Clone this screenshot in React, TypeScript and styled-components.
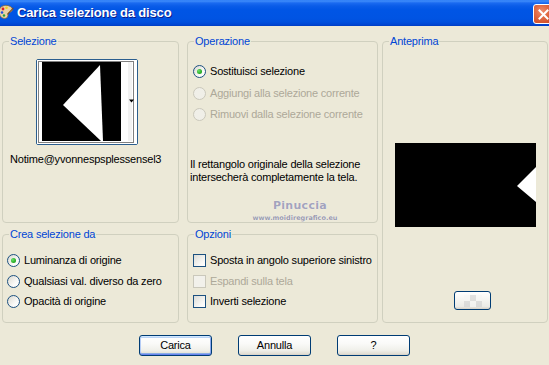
import React from 'react';
import styled, { createGlobalStyle } from 'styled-components';

const Global = createGlobalStyle`
  html, body { margin: 0; padding: 0; background: #ECE9D8; }
  body {
    width: 549px; height: 365px; overflow: hidden;
    font-family: "Liberation Sans", Arial, sans-serif;
    font-size: 11px; letter-spacing: -0.2px; color: #000;
  }
  * { box-sizing: border-box; }
`;

const Window = styled.div`
  width: 549px;
  height: 365px;
  background: #ECE9D8;
  display: flex;
  flex-direction: column;
  overflow: hidden;
`;

const TitleBar = styled.div`
  height: 26px;
  flex: none;
  display: flex;
  align-items: flex-start;
  background: linear-gradient(180deg, #2A7AF6 0px, #3F8DFA 1px, #1A6AF0 3px, #0A5CE8 6px, #0055E5 10px, #0054E3 18px, #0050DE 22px, #0044D0 25px, #003CC0 26px);
`;

const TitleIcon = styled.svg`
  width: 16px;
  height: 16px;
  margin: 4px 0 0 -2px;
  flex: none;
`;

const TitleText = styled.span`
  margin: 5px 0 0 3px;
  font-family: "Liberation Sans", Arial, sans-serif;
  font-weight: bold;
  font-size: 13px;
  line-height: 16px;
  letter-spacing: -0.15px;
  color: #FFFFFF;
  text-shadow: 1px 1px 0 #0A1E8C;
  flex: 1;
`;

const CloseButton = styled.div`
  width: 21px;
  height: 20px;
  margin: 4px -5px 0 0;
  flex: none;
  border: 1px solid #FFFFFF;
  border-radius: 3px;
  background: radial-gradient(circle at 40% 35%, #F08C6C 0%, #E06A44 40%, #D0502A 80%, #C04020 100%);
  display: flex;
  align-items: center;
  justify-content: center;
`;

const Body = styled.div`
  display: grid;
  grid-template-columns: 185px 195px 166px;
  grid-template-rows: 182px 89px;
  row-gap: 11px;
  padding: 15px 0 0 2px;
`;

const GroupBox = styled.div<{ $w: number; $row: string; $col: string }>`
  position: relative;
  width: ${p => p.$w}px;
  grid-row: ${p => p.$row};
  grid-column: ${p => p.$col};
  border: 1px solid #D0D0BF;
  border-radius: 4px;
  display: flex;
  flex-direction: column;
`;

const Legend = styled.span`
  position: absolute;
  top: -7px;
  left: 6px;
  padding: 0 1px;
  background: #ECE9D8;
  color: #0046D5;
  line-height: 13px;
`;

const SelContent = styled.div`
  padding: 17px 0 0 7px;
  display: flex;
  flex-direction: column;
`;

const Thumb = styled.div`
  width: 102px;
  height: 86px;
  margin-left: 26px;
  border: 1px solid #2B5E8E;
  border-radius: 2px;
  background: #FFFFFF;
  display: flex;
`;

const Caption = styled.div`
  margin-top: 8px;
  line-height: 13px;
`;

const OptionList = styled.div<{ $top: number; $left: number; $gap: number }>`
  display: flex;
  flex-direction: column;
  gap: ${p => p.$gap}px;
  padding: ${p => p.$top}px 0 0 ${p => p.$left}px;
`;

const OptionRow = styled.div<{ $disabled?: boolean }>`
  display: flex;
  align-items: center;
  gap: 4px;
  height: 13px;
  line-height: 13px;
  white-space: nowrap;
  color: ${p => (p.$disabled ? '#ACA899' : '#000000')};
`;

const RadioCircle = styled.span<{ $checked?: boolean; $disabled?: boolean }>`
  width: 13px;
  height: 13px;
  flex: none;
  border-radius: 50%;
  border: 1px solid ${p => (p.$disabled ? '#CAC8BB' : '#1C5180')};
  background: ${p =>
    p.$disabled
      ? '#F0EFE8'
      : 'linear-gradient(135deg, #D6D5CE 0%, #ECEBE6 35%, #FAFAF8 65%, #FFFFFF 100%)'};
  display: flex;
  align-items: center;
  justify-content: center;
  &::after {
    content: '';
    display: ${p => (p.$checked ? 'block' : 'none')};
    width: 5px;
    height: 5px;
    border-radius: 50%;
    background: radial-gradient(circle at 35% 35%, #6BE06A 0%, #2DB22C 55%, #0E8E0E 100%);
  }
`;

const CheckBox = styled.span<{ $disabled?: boolean }>`
  width: 13px;
  height: 13px;
  flex: none;
  border: 1px solid ${p => (p.$disabled ? '#CAC8BB' : '#1C5180')};
  background: ${p =>
    p.$disabled
      ? '#F2F1EB'
      : 'linear-gradient(135deg, #DCDCD7 0%, #ECECE8 40%, #FAFAF8 75%, #FFFFFF 100%)'};
`;

const InfoText = styled.div`
  margin: 37px 0 0 2px;
  line-height: 13px;
`;

const Watermark = styled.div`
  margin: 15px 0 0 0;
  display: flex;
  flex-direction: column;
  align-items: center;
  padding-left: 25px;
  font-family: "DejaVu Sans", Verdana, sans-serif;
  font-weight: bold;
  letter-spacing: 0;
  color: #A3A3BC;
  text-shadow: 0 0 1px #FFFFFF;
`;

const WmTitle = styled.span`
  font-size: 11px;
  line-height: 13px;
  letter-spacing: 0.3px;
  padding-left: 10px;
`;

const WmUrl = styled.span`
  font-size: 6.5px;
  line-height: 9px;
  margin-top: 2px;
  color: #9A9AAE;
`;

const PreviewContent = styled.div`
  padding-top: 101px;
  display: flex;
  flex-direction: column;
  align-items: center;
`;

const PreviewSvg = styled.svg`
  display: block;
  width: 141px;
  height: 84px;
`;

const SmallButton = styled.div`
  align-self: flex-start;
  margin: 64px 0 0 71px;
  width: 37px;
  height: 19px;
  border: 1px solid #003C74;
  border-radius: 3px;
  background: linear-gradient(180deg, #FFFFFF 0%, #F4F4F0 50%, #ECEBE6 85%, #D6D0C5 100%);
  display: flex;
  align-items: center;
  justify-content: center;
`;

const Checker = styled.span`
  width: 18px;
  height: 12px;
  opacity: 0.6;
  background-color: #F6F6F4;
  background-image:
    linear-gradient(45deg, #D0D0D0 25%, transparent 25%, transparent 75%, #D0D0D0 75%),
    linear-gradient(45deg, #D0D0D0 25%, transparent 25%, transparent 75%, #D0D0D0 75%);
  background-size: 12px 12px;
  background-position: 0 0, 6px 6px;
`;

const ButtonRow = styled.div`
  display: flex;
  justify-content: center;
  gap: 26px;
  margin-top: 12px;
`;

const Button = styled.div<{ $default?: boolean }>`
  width: 73px;
  height: 21px;
  border: 1px solid #003C74;
  border-radius: 3px;
  background: linear-gradient(180deg, #FFFFFF 0%, #FAFAF8 40%, #F0F0EA 75%, #E3E0D6 92%, #D6D0C5 100%);
  box-shadow: ${p =>
    p.$default
      ? 'inset 0 1px 0 #CEE7FF, inset 0 -1px 0 #6982EE, inset 1px 0 0 #B5CCF5, inset -1px 0 0 #8CA9EC, inset 0 2px 0 #BCD4F6, inset 0 -2px 0 #89ADE4'
      : 'none'};
  display: flex;
  align-items: center;
  justify-content: center;
  line-height: 13px;
  padding-bottom: 1px;
`;

type Opt = { label: string; checked?: boolean; disabled?: boolean };

const Radios: React.FC<{ items: Opt[]; top: number; left: number; gap: number }> = ({ items, top, left, gap }) => (
  <OptionList $top={top} $left={left} $gap={gap}>
    {items.map(it => (
      <OptionRow key={it.label} $disabled={it.disabled}>
        <RadioCircle $checked={it.checked} $disabled={it.disabled} />
        <span>{it.label}</span>
      </OptionRow>
    ))}
  </OptionList>
);

const Checks: React.FC<{ items: Opt[]; top: number; left: number; gap: number }> = ({ items, top, left, gap }) => (
  <OptionList $top={top} $left={left} $gap={gap}>
    {items.map(it => (
      <OptionRow key={it.label} $disabled={it.disabled}>
        <CheckBox $disabled={it.disabled} />
        <span>{it.label}</span>
      </OptionRow>
    ))}
  </OptionList>
);

const AppIcon = () => (
  <TitleIcon viewBox="0 0 16 16">
    <path d="M3 3 C6 0.5 12 1 14 4 C15.5 6.5 13 8 11 8.5 C9.5 9 10.5 11 9.5 13 C8 15.5 3.5 14.5 2 11.5 C0.5 8.5 1 5 3 3 Z" fill="#E8D2A6" stroke="#8A6A3A" strokeWidth="0.8" />
    <circle cx="5" cy="5" r="1.4" fill="#E02020" />
    <circle cx="8.5" cy="3.8" r="1.3" fill="#F0D020" />
    <circle cx="4" cy="8.5" r="1.3" fill="#2050E0" />
    <circle cx="6" cy="11.5" r="1.2" fill="#20A040" />
    <path d="M9 10 L15 3.5 L15.8 4.3 L9.8 10.8 Z" fill="#7A4A20" />
  </TitleIcon>
);

const ThumbImage = () => (
  <svg width="100" height="84" viewBox="0 0 100 84" style={{ display: 'block' }}>
    <rect x="0" y="0" width="100" height="84" fill="#FFFFFF" />
    <rect x="5" y="2" width="79" height="79" fill="#000000" />
    <polygon points="26,45 63,5 66,81 64,81" fill="#FFFFFF" />
    <rect x="84" y="2" width="7" height="79" fill="#FFFFFF" />
    <rect x="91" y="2" width="4" height="79" fill="#F2F2F2" />
    <rect x="1.5" y="1.5" width="95" height="81" fill="none" stroke="#000000" strokeWidth="1" strokeDasharray="1 1" />
    <polygon points="92,39.5 97,39.5 94.5,42.5" fill="#000000" />
  </svg>
);

export default function App() {
  return (
    <>
      <Global />
      <Window>
        <TitleBar>
          <AppIcon />
          <TitleText>Carica selezione da disco</TitleText>
          <CloseButton>
            <svg width="11" height="11" viewBox="0 0 11 11">
              <path d="M1.5 1.5 L9.5 9.5 M9.5 1.5 L1.5 9.5" stroke="#FFFFFF" strokeWidth="2" strokeLinecap="square" />
            </svg>
          </CloseButton>
        </TitleBar>

        <Body>
          <GroupBox $w={177} $row="1" $col="1">
            <Legend>Selezione</Legend>
            <SelContent>
              <Thumb>
                <ThumbImage />
              </Thumb>
              <Caption>Notime@yvonnespsplessensel3</Caption>
            </SelContent>
          </GroupBox>

          <GroupBox $w={191} $row="1" $col="2">
            <Legend>Operazione</Legend>
            <Radios
              top={23}
              left={5}
              gap={8.5}
              items={[
                { label: 'Sostituisci selezione', checked: true },
                { label: 'Aggiungi alla selezione corrente', disabled: true },
                { label: 'Rimuovi dalla selezione corrente', disabled: true },
              ]}
            />
            <InfoText>
              Il rettangolo originale della selezione
              <br />
              intersecherà completamente la tela.
            </InfoText>
            <Watermark>
              <WmTitle>Pinuccia</WmTitle>
              <WmUrl>www.moidiregrafico.eu</WmUrl>
            </Watermark>
          </GroupBox>

          <GroupBox $w={166} $row="1 / span 2" $col="3">
            <Legend>Anteprima</Legend>
            <PreviewContent>
              <PreviewSvg viewBox="0 0 141 84">
                <rect x="0" y="0" width="141" height="84" fill="#000000" />
                <polygon points="122,43 141,24 141,59" fill="#FFFFFF" />
              </PreviewSvg>
              <SmallButton>
                <Checker />
              </SmallButton>
            </PreviewContent>
          </GroupBox>

          <GroupBox $w={177} $row="2" $col="1">
            <Legend>Crea selezione da</Legend>
            <Radios
              top={19}
              left={4}
              gap={7.5}
              items={[
                { label: 'Luminanza di origine', checked: true },
                { label: 'Qualsiasi val. diverso da zero' },
                { label: 'Opacità di origine' },
              ]}
            />
          </GroupBox>

          <GroupBox $w={191} $row="2" $col="2">
            <Legend>Opzioni</Legend>
            <Checks
              top={19}
              left={5}
              gap={7.5}
              items={[
                { label: 'Sposta in angolo superiore sinistro' },
                { label: 'Espandi sulla tela', disabled: true },
                { label: 'Inverti selezione' },
              ]}
            />
          </GroupBox>
        </Body>

        <ButtonRow>
          <Button $default>Carica</Button>
          <Button>Annulla</Button>
          <Button>?</Button>
        </ButtonRow>
      </Window>
    </>
  );
}
